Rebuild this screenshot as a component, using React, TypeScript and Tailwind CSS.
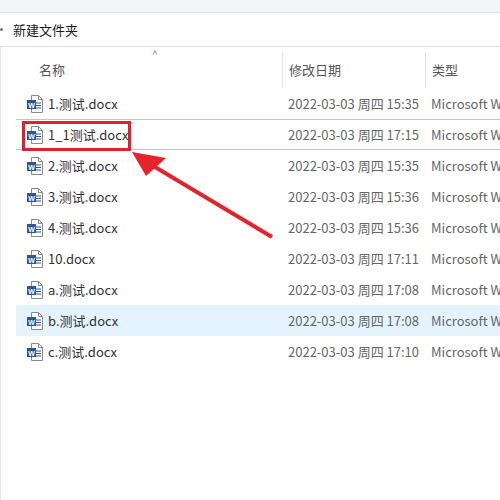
const rows = [
  { name: "1.测试.docx", date: "2022-03-03 周四 15:35" },
  { name: "1_1测试.docx", date: "2022-03-03 周四 17:15", focus: true },
  { name: "2.测试.docx", date: "2022-03-03 周四 15:35" },
  { name: "3.测试.docx", date: "2022-03-03 周四 15:36" },
  { name: "4.测试.docx", date: "2022-03-03 周四 15:36" },
  { name: "10.docx", date: "2022-03-03 周四 17:11" },
  { name: "a.测试.docx", date: "2022-03-03 周四 17:08" },
  { name: "b.测试.docx", date: "2022-03-03 周四 17:08", selected: true },
  { name: "c.测试.docx", date: "2022-03-03 周四 17:10" },
];

function WordIcon() {
  return (
    <svg width="16" height="18" viewBox="0 0 16 18" className="shrink-0">
      <path d="M4.5 0.5h7l4 4v13h-11z" fill="#fff" stroke="#8a8a8a" />
      <path d="M11.5 0.5v4h4" fill="none" stroke="#8a8a8a" />
      <path d="M9 8h5M9 10.5h5M9 13h5" stroke="#2b5797" strokeWidth="1" />
      <rect x="0" y="5" width="9" height="9" fill="#2b5797" />
      <text x="4.5" y="12.5" fontSize="7" fontWeight="bold" fill="#fff" textAnchor="middle" fontFamily="Liberation Sans, sans-serif">W</text>
    </svg>
  );
}

export default function App() {
  return (
    <div
      className="relative w-[500px] h-[500px] overflow-hidden bg-white text-[13px] text-[#1a1a1a]"
      style={{ fontFamily: '"Noto Sans CJK SC", "Liberation Sans", sans-serif' }}
    >
      <div className="h-[13px] bg-[#f3f6f8] border-b border-[#e3e3e3]" />
      <div className="h-[34px] flex items-center border-b border-[#e3e3e3]">
        <span className="w-[3px] h-[3px] bg-gray-500 rounded-full" />
        <span className="ml-[10px]">新建文件夹</span>
      </div>
      <div className="flex h-[453px]">
        <div className="w-[9px] bg-[#f5f5f5] border-r border-[#e5e5e5]" />
        <div className="flex-1 flex flex-col">
          <div className="relative flex h-[36px] mt-[5px] pl-[8px] text-[#555] items-center">
            <span className="absolute left-[151px] -top-[6px] text-[10px] text-[#777]">^</span>
            <div className="w-[273px] pl-[30px]">名称</div>
            <div className="w-[143px] pl-[6px] border-l border-[#e5e5e5] h-full flex items-center">修改日期</div>
            <div className="flex-1 pl-[6px] border-l border-[#e5e5e5] h-full flex items-center">类型</div>
          </div>
          <div className="flex flex-col ml-[15px]">
            {rows.map((r) => (
              <div
                key={r.name}
                className={`flex items-center h-[31px] border-y ${
                  r.selected ? "bg-[#e5f3ff] border-[#e5f3ff]" : r.focus ? "border-[#a9cde3]" : "border-transparent"
                } text-[#333]`}
              >
                <div className="w-[266px] flex items-center gap-[5px] pl-[11px] whitespace-nowrap">
                  <WordIcon />
                  <span>{r.name}</span>
                </div>
                <div className="w-[143px] pl-[6px] text-[#666] whitespace-nowrap">{r.date}</div>
                <div className="flex-1 pl-[6px] text-[#666] whitespace-nowrap overflow-hidden">Microsoft Word</div>
              </div>
            ))}
          </div>
        </div>
      </div>
      <div className="absolute left-[22px] top-[121px] w-[109px] h-[30px] border-[3px] border-[#e0202a]" />
      <svg className="absolute left-0 top-0" width="500" height="500">
        <path d="M272 237L150 164" stroke="#e3242b" strokeWidth="4" />
        <polygon points="132,152 166,158 146,176" fill="#e3242b" />
      </svg>
    </div>
  );
}
